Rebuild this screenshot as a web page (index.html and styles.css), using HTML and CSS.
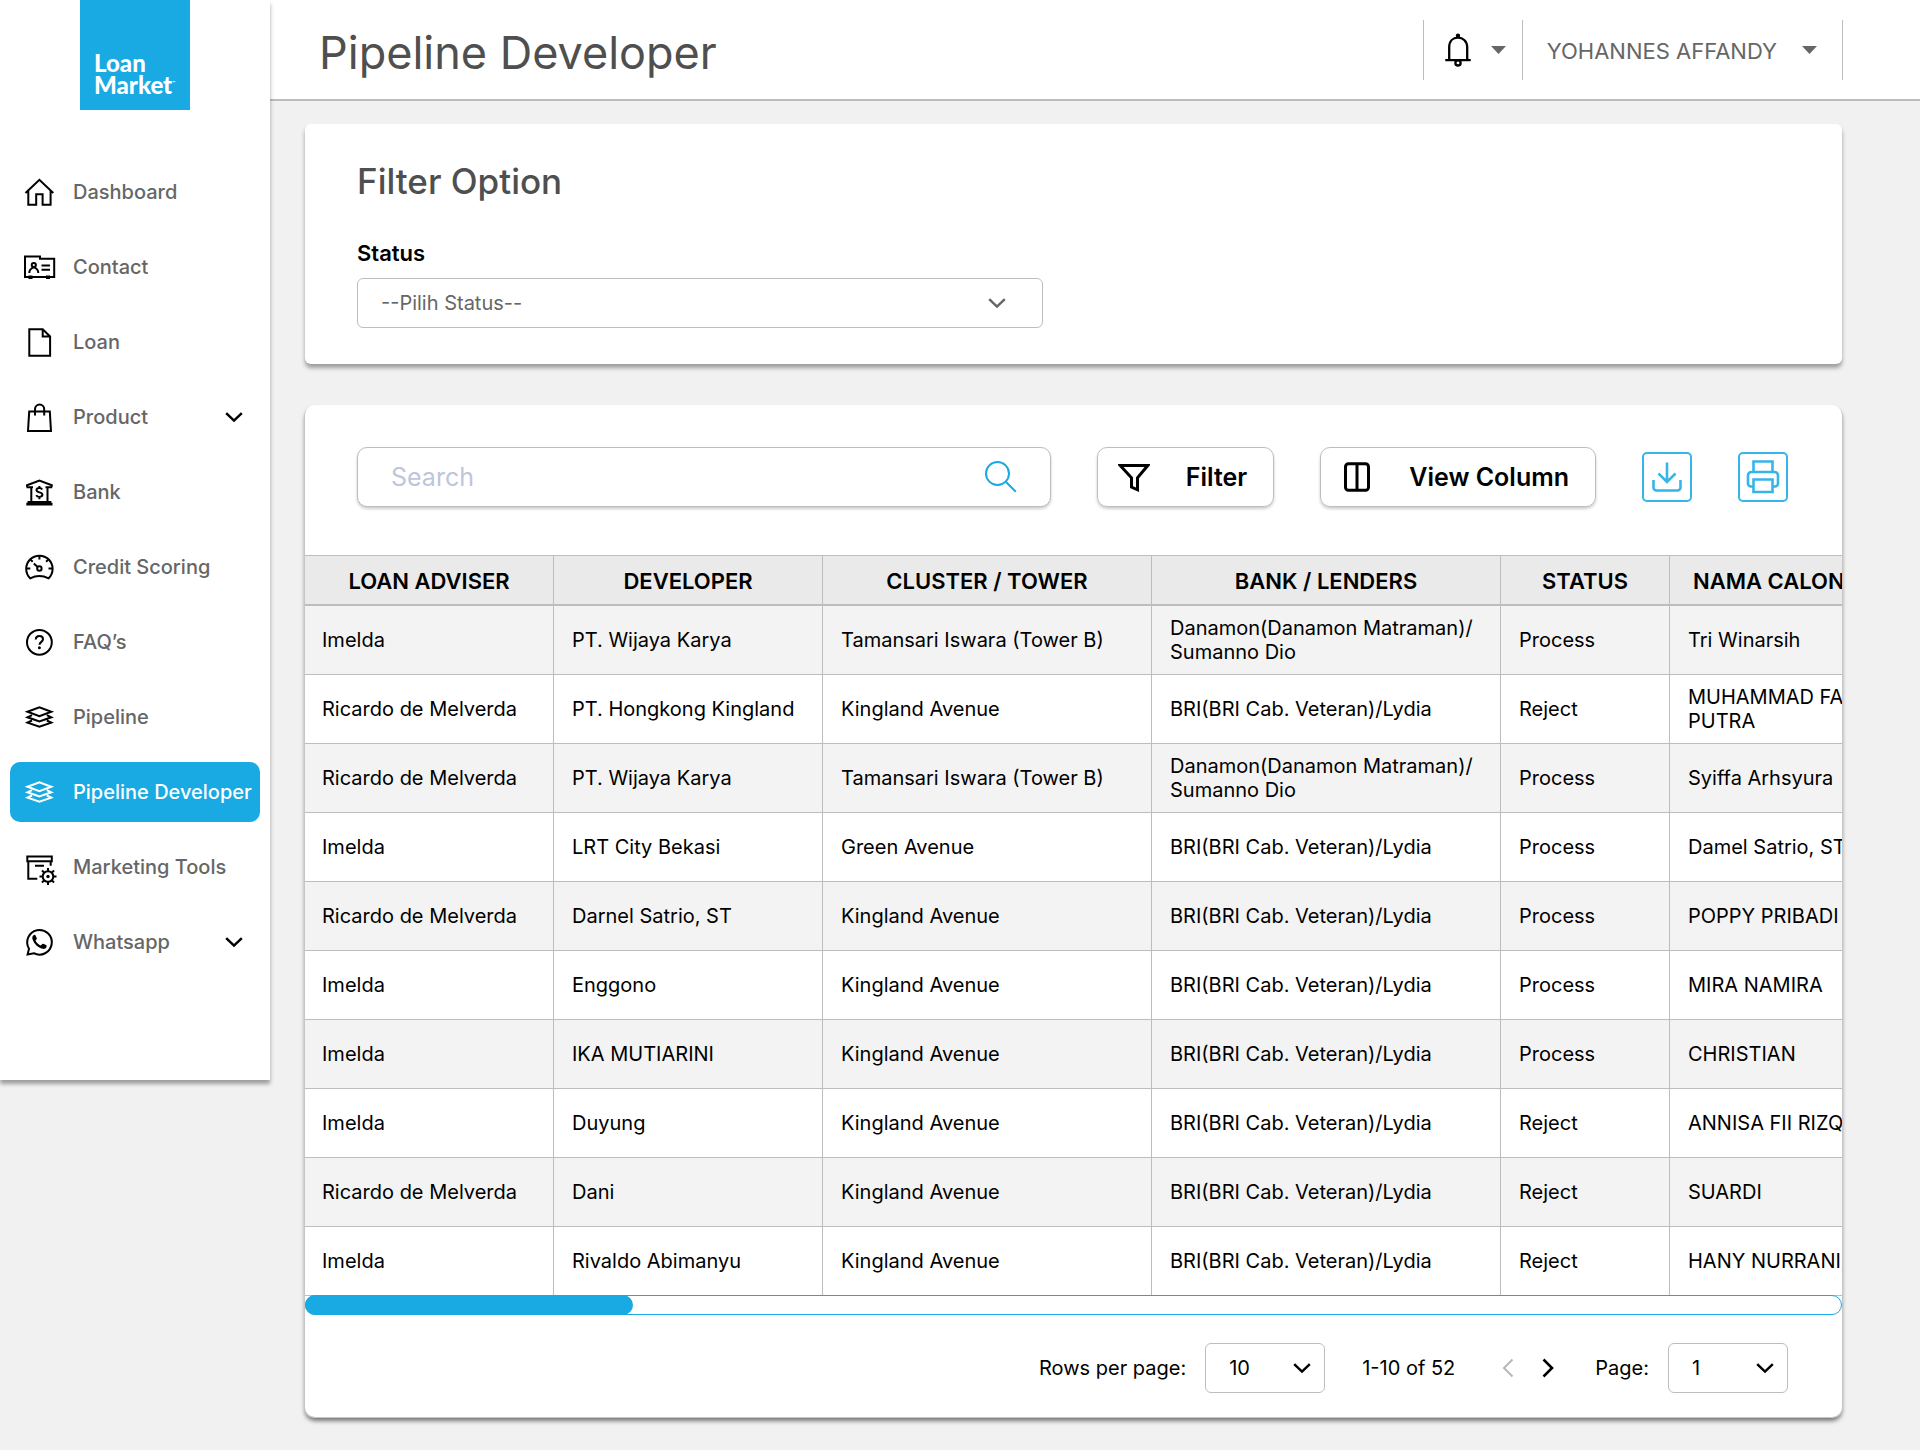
FILE: index.html
```html
<!DOCTYPE html>
<html lang="id">
<head>
<meta charset="utf-8">
<meta name="viewport" content="width=device-width, initial-scale=1">
<title>Pipeline Developer</title>
<link rel="stylesheet" href="styles.css">
</head>
<body>
<div class="app">
  <aside class="sidebar">
    <a class="logo" href="#">Loan<br>Market<sup class="logo-mark">™</sup></a>
    <nav class="nav">
      <a class="nav-item" href="#"><svg class="icon" viewBox="0 0 32 32"><path d="M2.5 17 16.4 3.8 30.3 17M5.3 14.5v14.2h7.9V18.3h6.4v10.4h8V14.5"/></svg><span>Dashboard</span></a>
      <a class="nav-item" href="#"><svg class="icon" viewBox="0 0 32 32"><path d="M2 5.6h15v2.2h14.2V26H2z"/><circle cx="10.8" cy="14" r="2.1"/><path d="M6.3 22c0-2.6 1.6-4.6 4.5-5.6 2.9 1 4.5 3 4.5 5.6M18.5 14.6H27M18.5 18.8H27"/><path d="M5.5 24.5h4v3.500h-4zM23 24.500h4v3.500h-4z" fill="currentColor" stroke="none"/></svg><span>Contact</span></a>
      <a class="nav-item" href="#"><svg class="icon" viewBox="0 0 32 32"><path d="M6.300 3.300h13.400l7.400 7.200v19.200H6.300zM19.700 3.300v7.200h7.400"/></svg><span>Loan</span></a>
      <a class="nav-item" href="#"><svg class="icon" viewBox="0 0 32 32"><path d="M6.200 10.500h20.600L28 30H5zM12 14.500V8.300a4.600 4.800 0 0 1 9.200 0v6.200"/></svg><span>Product</span><svg class="chevron" viewBox="0 0 18 10"><path d="M1.200 1.200 9 8.600l7.800-7.400"/></svg></a>
      <a class="nav-item" href="#"><svg class="icon" viewBox="0 0 32 32"><path d="M4 10.800V9.200l12.400-4.700L28.800 9.200v1.600M3.500 11.300H10M22.500 11.300h6.700M8.300 11v15M24.500 11v15"/><path d="M4.500 25h23.800v1.700h1.200v2.900H3.300v-2.900h1.200z" fill="currentColor" stroke="none"/><path d="M19.200 13.400c-.6-1-1.600-1.500-2.900-1.500-1.700 0-2.800.9-2.800 2.200 0 3 5.900 1.500 5.900 4.500 0 1.400-1.200 2.300-3 2.300-1.500 0-2.600-.7-3.100-1.800M16.400 10v1.900M16.400 21v2.200"/></svg><span>Bank</span></a>
      <a class="nav-item" href="#"><svg class="icon" viewBox="0 0 32 32"><path d="M7.200 27.300a13.200 13.200 0 1 1 18.400 0q-9.200-4.600-18.400 0z"/><circle cx="16.400" cy="17.500" r="2.200"/><path d="m14.700 15.900-3.900-3.400M16.400 5v3.600M3.500 17.500h3.800M25.500 17.500h3.800M7.500 8.600l2.200 2.200M25.300 8.600l-2.200 2.200"/></svg><span>Credit Scoring</span></a>
      <a class="nav-item" href="#"><svg class="icon" viewBox="0 0 32 32"><circle cx="16.400" cy="16.300" r="12.400"/><path d="M12.800 13.500c0-2.100 1.500-3.500 3.600-3.500s3.600 1.400 3.600 3.300c0 2.500-3.500 2.700-3.500 5.500"/><circle cx="16.400" cy="21.700" r="1.500" fill="currentColor" stroke="none"/></svg><span>FAQ’s</span></a>
      <a class="nav-item" href="#"><svg class="icon" viewBox="0 0 32 32"><path d="m4.500 10.700 11.900-4.400 11.900 4.400-11.900 4.400zM9 14.200l-4.500 2.100 11.900 4.200 11.900-4.200-4.500-2.100M9 19.500l-4.500 2.100 11.900 4.200 11.900-4.200-4.500-2.100"/></svg><span>Pipeline</span></a>
      <a class="nav-item nav-item-active" href="#" aria-current="page"><svg class="icon" viewBox="0 0 32 32"><path d="m4.500 10.700 11.900-4.400 11.900 4.400-11.900 4.400zM9 14.200l-4.500 2.100 11.900 4.200 11.900-4.200-4.500-2.100M9 19.500l-4.500 2.100 11.900 4.200 11.900-4.200-4.500-2.100"/></svg><span>Pipeline Developer</span></a>
      <a class="nav-item" href="#"><svg class="icon" viewBox="0 0 32 32"><path d="M4.300 5.500h24.500v4.800H4.300zM5.300 10.300v17.400h9M27.700 10.300v4.500M12 14.800h9"/><circle cx="25" cy="25.500" r="5.300"/><circle cx="25" cy="25.500" r="1.700" fill="currentColor" stroke="none"/><path d="M25 17v3M25 31v3M16.500 25.500h3M30.500 25.500h3M19 19.500l2 2M29 29.500l2 2M31 19.500l-2 2M21 29.500l-2 2"/></svg><span>Marketing Tools</span></a>
      <a class="nav-item" href="#"><svg class="icon" viewBox="0 0 32 32"><path d="M4.600 28.500 6 22.700a12.300 12.300 0 1 1 4.800 4.500z"/><path d="M12.600 9.600c-.5-.9-1.100-1-1.700-.7-1.500.8-2 2.600-1.300 4.600 1.500 4.400 5.500 8.300 9.900 9.300 2 .4 3.500-.4 4-1.900.3-.9.200-1.400-.5-1.800l-2.700-1.300c-.6-.2-.9 0-1.300.5l-1.100 1.300c-2.400-.9-4.300-2.700-5.400-5l1.100-1.400c.3-.4.300-.7.100-1.200z" fill="currentColor" stroke="none"/></svg><span>Whatsapp</span><svg class="chevron" viewBox="0 0 18 10"><path d="M1.200 1.200 9 8.600l7.800-7.400"/></svg></a>
    </nav>
  </aside>

  <div class="content">
    <header class="topbar">
      <h1 class="page-title">Pipeline Developer</h1>
      <div class="account">
        <button class="bell-button" type="button" aria-label="Notifications">
          <svg class="bell" viewBox="0 0 26 34"><path d="M4.200 27V14.300C4.200 8.300 7.900 4.700 13 4.700s9.200 3.600 9.200 9.600V27M.300 27.200h25.400"/><circle cx="13" cy="29.900" r="2.600"/><circle cx="13" cy="2.800" r="2.200" fill="currentColor" stroke="none"/></svg>
          <svg class="caret" viewBox="0 0 15 8"><path d="M0 0h15L7.500 8z"/></svg>
        </button>
        <button class="user-button" type="button">
          <span>YOHANNES AFFANDY</span>
          <svg class="caret" viewBox="0 0 15 8"><path d="M0 0h15L7.500 8z"/></svg>
        </button>
      </div>
    </header>

    <main class="main">
      <section class="card filter-card">
        <h2 class="card-title">Filter Option</h2>
        <label class="field-label" for="status">Status</label>
        <div class="select-box status-box">
          <select class="select status-select" id="status"><option>--Pilih Status--</option><option>Process</option><option>Reject</option></select>
          <svg class="chevron select-chevron" viewBox="0 0 18 10"><path d="M1.200 1.200 9 8.600l7.800-7.400"/></svg>
        </div>
      </section>

      <section class="card table-card">
        <div class="toolbar">
          <div class="search">
            <input class="search-input" type="search" placeholder="Search" aria-label="Search">
            <svg class="search-icon" viewBox="0 0 32 32"><circle cx="12.500" cy="12.500" r="11.500"/><path d="m20.800 20.800 10 10"/></svg>
          </div>
          <button class="tool-button" type="button"><svg class="tool-icon" viewBox="0 0 32 32"><path d="M2.200 4.500h27.600l-10.300 12.300v12l-6-2.700v-9.300z"/></svg><span>Filter</span></button>
          <button class="tool-button" type="button"><svg class="tool-icon" viewBox="0 0 32 32"><rect x="4.500" y="2.800" width="23" height="26.400" rx="3"/><path d="M16 3v26"/></svg><span>View Column</span></button>
          <button class="square-button" type="button" aria-label="Download"><svg class="square-icon" viewBox="0 0 50 50"><path d="M25 10.500v19M16.500 21.500l8.500 8.500 8.500-8.500M11.500 28v7.500a3 3 0 0 0 3 3h21a3 3 0 0 0 3-3V28"/></svg></button>
          <button class="square-button" type="button" aria-label="Print"><svg class="square-icon" viewBox="0 0 50 50"><path d="M15.500 20V9.500h19V20M15.500 34.500H13a3 3 0 0 1-3-3v-8a3.500 3.500 0 0 1 3.500-3.500h23a3.500 3.500 0 0 1 3.500 3.500v8a3 3 0 0 1-3 3h-2.500M15.500 27.500h19v12.500h-19z"/></svg></button>
        </div>

        <div class="table-scroll">
          <table class="table">
            <colgroup><col class="col-adviser"><col class="col-developer"><col class="col-cluster"><col class="col-bank"><col class="col-status"><col class="col-name"></colgroup>
            <thead>
              <tr><th>LOAN ADVISER</th><th>DEVELOPER</th><th>CLUSTER / TOWER</th><th>BANK / LENDERS</th><th>STATUS</th><th class="name-head">NAMA CALON</th></tr>
            </thead>
            <tbody>
              <tr><td>Imelda</td><td>PT. Wijaya Karya</td><td>Tamansari Iswara (Tower B)</td><td>Danamon(Danamon Matraman)/<br>Sumanno Dio</td><td>Process</td><td>Tri Winarsih</td></tr>
              <tr><td>Ricardo de Melverda</td><td>PT. Hongkong Kingland</td><td>Kingland Avenue</td><td>BRI(BRI Cab. Veteran)/Lydia</td><td>Reject</td><td>MUHAMMAD FA<br>PUTRA</td></tr>
              <tr><td>Ricardo de Melverda</td><td>PT. Wijaya Karya</td><td>Tamansari Iswara (Tower B)</td><td>Danamon(Danamon Matraman)/<br>Sumanno Dio</td><td>Process</td><td>Syiffa Arhsyura</td></tr>
              <tr><td>Imelda</td><td>LRT City Bekasi</td><td>Green Avenue</td><td>BRI(BRI Cab. Veteran)/Lydia</td><td>Process</td><td>Damel Satrio, ST</td></tr>
              <tr><td>Ricardo de Melverda</td><td>Darnel Satrio, ST</td><td>Kingland Avenue</td><td>BRI(BRI Cab. Veteran)/Lydia</td><td>Process</td><td>POPPY PRIBADI</td></tr>
              <tr><td>Imelda</td><td>Enggono</td><td>Kingland Avenue</td><td>BRI(BRI Cab. Veteran)/Lydia</td><td>Process</td><td>MIRA NAMIRA</td></tr>
              <tr><td>Imelda</td><td>IKA MUTIARINI</td><td>Kingland Avenue</td><td>BRI(BRI Cab. Veteran)/Lydia</td><td>Process</td><td>CHRISTIAN</td></tr>
              <tr><td>Imelda</td><td>Duyung</td><td>Kingland Avenue</td><td>BRI(BRI Cab. Veteran)/Lydia</td><td>Reject</td><td>ANNISA FII RIZQ</td></tr>
              <tr><td>Ricardo de Melverda</td><td>Dani</td><td>Kingland Avenue</td><td>BRI(BRI Cab. Veteran)/Lydia</td><td>Reject</td><td>SUARDI</td></tr>
              <tr><td>Imelda</td><td>Rivaldo Abimanyu</td><td>Kingland Avenue</td><td>BRI(BRI Cab. Veteran)/Lydia</td><td>Reject</td><td>HANY NURRANI,</td></tr>
            </tbody>
          </table>
        </div>
        <div class="scroll-track"><div class="scroll-thumb"></div></div>

        <div class="pagination">
          <label for="rows">Rows per page:</label>
          <div class="select-box page-box">
            <select class="select page-select" id="rows"><option>10</option><option>25</option></select>
            <svg class="chevron select-chevron" viewBox="0 0 18 10"><path d="M1.200 1.200 9 8.600l7.800-7.400"/></svg>
          </div>
          <span class="range">1-10 of 52</span>
          <button class="step" type="button" aria-label="Previous page" disabled><svg class="step-icon" viewBox="0 0 12 20"><path d="M10.500 1.500 2 10l8.500 8.500"/></svg></button>
          <button class="step step-next" type="button" aria-label="Next page"><svg class="step-icon" viewBox="0 0 12 20"><path d="M1.500 1.500 10 10l-8.500 8.500"/></svg></button>
          <label for="page">Page:</label>
          <div class="select-box page-box">
            <select class="select page-select" id="page"><option>1</option><option>2</option></select>
            <svg class="chevron select-chevron" viewBox="0 0 18 10"><path d="M1.200 1.200 9 8.600l7.800-7.400"/></svg>
          </div>
        </div>
      </section>
    </main>
  </div>
</div>
</body>
</html>
```

FILE: styles.css
```css
:root {
  --blue: #19a9e3;
  --line: #bdbdbd;
  --grey: #666666;
}

* { box-sizing: border-box; }

body {
  margin: 0;
  background: #f1f1f1;
  color: #000;
  font-family: Inter, "Liberation Sans", sans-serif;
  font-size: 20px;
  line-height: 24px;
}

button, input, select { font: inherit; color: inherit; }
button { background: none; border: 0; padding: 0; cursor: pointer; }
svg { display: block; flex: none; fill: none; stroke: currentColor; stroke-width: 2; }

.app {
  display: grid;
  grid-template-columns: 270px minmax(0, 1fr);
  align-items: start;
}

/* Sidebar */
.sidebar {
  position: relative;
  z-index: 1;
  padding-bottom: 108px;
  background: #fff;
  box-shadow: 0 4px 4px rgba(0, 0, 0, 0.35);
}

.logo {
  display: block;
  width: 110px;
  height: 110px;
  margin: 0 auto;
  padding: 52px 0 0 14px;
  background: var(--blue);
  color: #fff;
  font: 900 24px/22px Lato, sans-serif;
  text-decoration: none;
  white-space: nowrap;
}
.logo-mark { font-size: 4px; line-height: 0; vertical-align: 10px; }

.nav {
  display: flex;
  flex-direction: column;
  gap: 15px;
  padding: 52px 10px 0;
}
.nav-item {
  display: flex;
  align-items: center;
  gap: 18px;
  height: 60px;
  padding: 0 0 0 13px;
  border-radius: 10px;
  color: var(--grey);
  font-weight: 500;
  text-decoration: none;
  white-space: nowrap;
}
.nav-item-active { background: var(--blue); color: #fff; }
.icon { width: 32px; height: 32px; color: #000; overflow: visible; }
.nav-item-active .icon { color: #fff; }
.chevron {
  width: 18px;
  height: 10px;
  overflow: visible;
  color: #000;
  stroke-width: 2.5;
}
.nav-item .chevron { margin: 0 17px 0 auto; }

/* Top bar */
.topbar {
  display: flex;
  justify-content: space-between;
  align-items: center;
  padding: 0 77px 0 49px;
  background: #fff;
  border-bottom: 2px solid var(--line);
}
.page-title {
  margin: 0;
  padding: 7px 0 0;
  color: #4f4f4f;
  font-size: 45px;
  font-weight: 400;
  line-height: 92px;
}
.account { display: flex; height: 60px; color: var(--grey); }
.bell-button, .user-button {
  display: flex;
  align-items: center;
  border-left: 1px solid var(--line);
}
.bell-button { gap: 20px; padding: 0 16px 0 21px; }
.user-button {
  gap: 25px;
  padding: 0 25px 0 24px;
  border-right: 1px solid var(--line);
  font-size: 22px;
}
.user-button span { padding-top: 2px; }
.bell { width: 26px; height: 34px; color: #000; stroke-width: 2.3; }
.caret { width: 15px; height: 8px; fill: currentColor; stroke: none; }

/* Cards */
.main {
  display: flex;
  flex-direction: column;
  gap: 41px;
  padding: 23px 78px 33px 35px;
}
.card { background: #fff; box-shadow: 0 4px 4px rgba(0, 0, 0, 0.35); }
.filter-card { padding: 36px 52px; border-radius: 6px; }
.card-title {
  margin: 0 0 39px;
  color: #4f4f4f;
  font-size: 35px;
  font-weight: 500;
  line-height: 42px;
}
.field-label { display: block; margin-bottom: 13px; font-size: 22px; font-weight: 600; }

.select-box { position: relative; }
.select {
  appearance: none;
  width: 100%;
  height: 50px;
  padding: 0 50px 0 23px;
  background: #fff;
  border: 1px solid var(--line);
  border-radius: 6px;
}
.select-chevron {
  position: absolute;
  top: 20px;
  right: 14px;
  pointer-events: none;
}
.status-box { max-width: 686px; }
.status-select { color: var(--grey); }
.status-box .select-chevron { right: 37px; color: var(--grey); }

/* Table card */
.table-card {
  border-radius: 10px;
  box-shadow: 1px 1px 0 #c6c6c6, -1px 1px 0 #c6c6c6, 0 4px 4px rgba(0, 0, 0, 0.5);
}
.toolbar {
  display: flex;
  align-items: center;
  gap: 46px;
  padding: 42px 54px 48px 52px;
}
.search { position: relative; flex: 1; }
.search-input {
  appearance: none;
  display: block;
  width: 100%;
  height: 60px;
  padding: 0 80px 0 33px;
  background: #fff;
  border: 1px solid var(--line);
  border-radius: 10px;
  box-shadow: 0 2px 3px rgba(0, 0, 0, 0.2);
  font-size: 25px;
}
.search-input::placeholder { color: #bfc5da; opacity: 1; }
.search-icon {
  position: absolute;
  top: 14px;
  right: 34px;
  width: 32px;
  height: 32px;
  color: var(--blue);
  pointer-events: none;
}
.tool-button {
  display: flex;
  align-items: center;
  gap: 36px;
  height: 60px;
  padding: 0 26px 0 20px;
  border: 1px solid var(--line);
  border-radius: 10px;
  box-shadow: 0 2px 3px rgba(0, 0, 0, 0.2);
  font-size: 25px;
  font-weight: 600;
  white-space: nowrap;
}
.tool-icon { width: 32px; height: 32px; stroke-width: 3; }
.square-button {
  width: 50px;
  height: 50px;
  border: 2px solid #36b5e9;
  border-radius: 5px;
  color: #36b5e9;
}
.square-icon { width: 50px; height: 50px; margin: -2px; stroke-width: 2.6; }

.table-scroll { overflow: hidden; }
.table {
  width: 100%;
  min-width: 1665px;
  table-layout: fixed;
  border-collapse: separate;
  border-spacing: 0;
}
.col-adviser { width: 249px; }
.col-developer { width: 269px; }
.col-cluster { width: 329px; }
.col-bank { width: 349px; }
.col-status { width: 169px; }
.col-name { width: 300px; }
.table th {
  height: 51px;
  padding: 2px 0 0;
  background: #eaeaea;
  border: solid var(--line);
  border-width: 1px 1px 2px 0;
  font-size: 22px;
  font-weight: 600;
}
.table .name-head { padding-left: 23px; text-align: left; }
.table td {
  height: 69px;
  padding: 0 0 0 18px;
  border: solid var(--line);
  border-width: 0 1px 1px 0;
  white-space: nowrap;
}
.table td:first-child { padding-left: 17px; }
.table tbody tr:nth-child(odd) { background: #f3f3f3; }

/* The track lies over the last row's bottom line */
.scroll-track {
  position: relative;
  height: 20px;
  margin-top: -1px;
  background: #fff;
  border: 1px solid var(--blue);
  border-radius: 10px;
}
.scroll-thumb {
  width: 328px;
  height: 20px;
  margin: -1px;
  background: var(--blue);
  border-radius: 10px;
}

.pagination {
  display: flex;
  justify-content: flex-end;
  align-items: center;
  padding: 28px 54px 24px;
}
.page-box { width: 120px; margin-left: 19px; }
.range { margin: 0 47px 0 37px; }
.step { color: #000; }
.step:disabled { color: #b8b8b8; }
.step-next { margin: 0 41px 0 28px; }
.step-icon { width: 12px; height: 20px; stroke-width: 2.6; }
.step:disabled .step-icon { stroke-width: 2; }
```
